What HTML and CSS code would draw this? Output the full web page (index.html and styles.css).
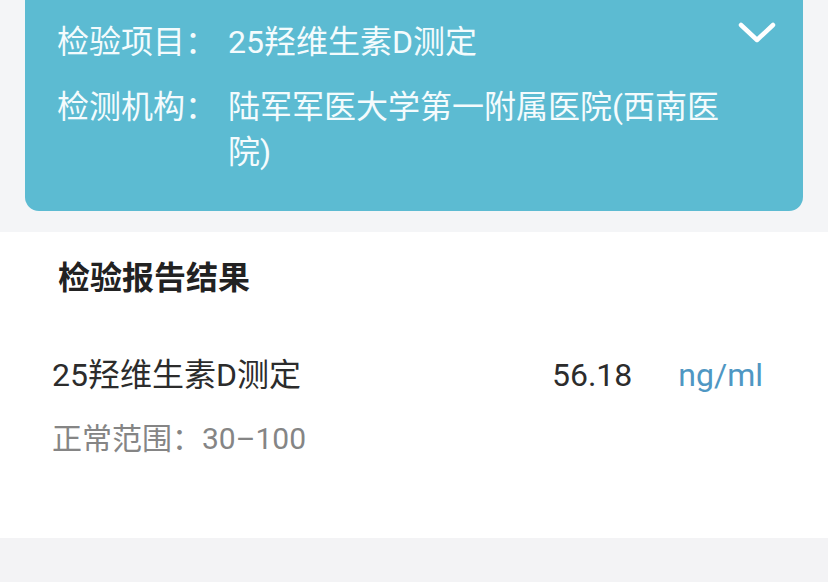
FILE: index.html
```html
<!DOCTYPE html>
<html lang="zh-CN">
<head>
<meta charset="utf-8">
<link rel="stylesheet" href="styles.css">
</head>
<body>
<div class="top">
  <div class="card">
    <div class="card-rows">
      <div class="card-row">
        <span class="label">检验项目：</span>
        <span class="value">25羟维生素D测定</span>
      </div>
      <div class="card-row">
        <span class="label">检测机构：</span>
        <span class="value">陆军军医大学第一附属医院(西南医院)</span>
      </div>
    </div>
    <svg class="chevron" width="40" height="24" viewBox="0 0 40 24" aria-hidden="true">
      <path d="M4 4 L20 19 L36 4" fill="none" stroke="#ffffff" stroke-width="4.5" stroke-linecap="round" stroke-linejoin="round"/>
    </svg>
  </div>
</div>
<div class="result">
  <h2 class="result-title">检验报告结果</h2>
  <div class="result-item">
    <span class="item-name">25羟维生素D测定</span>
    <span class="item-value">56.18</span>
    <span class="item-unit">ng/ml</span>
  </div>
  <div class="item-range">正常范围：30–100</div>
</div>
<div class="bottom"></div>
</body>
</html>
```
FILE: styles.css
```css
html, body {
  margin: 0;
  padding: 0;
}
body {
  width: 828px;
  height: 582px;
  overflow: hidden;
  background: #f3f3f5;
  font-family: Roboto, "Noto Sans CJK SC", sans-serif;
}
.top {
  background: #f4f5f7;
  padding: 0 25px 21px 25px;
}
.card {
  background: #5cbbd2;
  border-radius: 0 0 14px 14px;
  padding: 20px 24px 36px 32px;
  display: flex;
  align-items: flex-start;
  color: #f4fbfd;
  font-size: 32px;
  line-height: 45px;
}
.card-rows {
  flex: 1;
  display: flex;
  flex-direction: column;
  gap: 20px;
}
.card-row {
  display: flex;
}
.label {
  width: 171px;
  flex: none;
}
.value {
  width: 500px;
}
.chevron {
  margin-top: 1px;
  margin-right: 2px;
  flex: none;
}
.result {
  background: #ffffff;
  height: 306px;
  padding: 24px 65px 0 52px;
  box-sizing: border-box;
}
.result-title {
  margin: 0 0 52px 6px;
  font-size: 32px;
  line-height: 45px;
  font-weight: 700;
  color: #222222;
}
.result-item {
  display: flex;
  align-items: center;
  font-size: 32px;
  line-height: 45px;
  color: #2c2c2c;
}
.item-name {
  flex: 1;
}
.item-value {
  margin-right: 46px;
}
.item-unit {
  color: #4f97c3;
}
.item-range {
  margin-top: 18px;
  font-size: 30px;
  line-height: 45px;
  color: #858585;
}
.bottom {
  height: 60px;
  background: #f3f3f5;
}
```
